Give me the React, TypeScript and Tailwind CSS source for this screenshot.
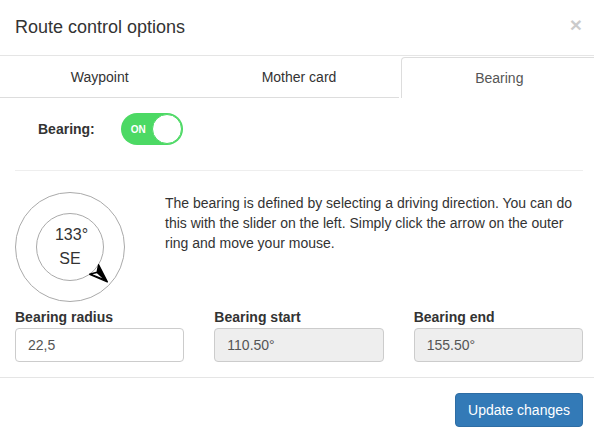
export default function App() {
  return (
    <div className="w-[594px] h-[440px] overflow-hidden bg-white">
      <div
        className="w-[598px] text-[14px] text-[#333]"
        style={{ fontFamily: '"Liberation Sans", Arial, sans-serif' }}
      >
        {/* Header */}
        <div className="h-[56px] border-b border-[#e5e5e5] px-[15px] flex items-center justify-between">
          <h4 className="text-[18px] leading-[26px] text-[#333] -mt-[2px]">Route control options</h4>
          <span className="text-[21px] font-bold leading-none text-black opacity-20 -mt-[6px] mr-[1px]">×</span>
        </div>

        {/* Tabs */}
        <div className="grid grid-cols-3 h-[42px]">
          <div className="border-b border-[#ddd] flex items-center justify-center text-[#333] pt-[2px]">Waypoint</div>
          <div className="border-b border-[#ddd] flex items-center justify-center text-[#333] pt-[2px]">Mother card</div>
          <div className="mt-[1px] ml-[2px] border-t border-l border-r border-[#ddd] rounded-t-[4px] flex items-center justify-center text-[#555] pt-[1px]">
            Bearing
          </div>
        </div>

        {/* Body */}
        <div className="px-[15px] pt-[15px] pb-[15px]">
          <div className="flex items-center h-[32px] pl-[23px] gap-[26px]">
            <label className="font-bold">Bearing:</label>
            <div className="w-[62px] h-[32px] rounded-full bg-[#4cd964] flex items-center justify-between pl-[10px] pr-[1px]">
              <span className="text-[10px] font-bold text-white">ON</span>
              <span className="w-[30px] h-[30px] rounded-full bg-white border border-[#4cd964]" />
            </div>
          </div>

          <div className="mt-[25px] border-t border-[#eee]" />

          <div className="mt-[21px] flex gap-[40px]">
            <div className="relative w-[110px] h-[110px] shrink-0 rounded-full border border-[#aaa] flex items-center justify-center">
              <div className="w-[68px] h-[68px] rounded-full border border-[#aaa] flex flex-col items-center justify-center text-[16px] leading-[24px] text-[#333]">
                <span className="ml-[3px]">133°</span>
                <span>SE</span>
              </div>
              <svg className="absolute left-[73px] top-[71px]" width="22" height="22" viewBox="-11 -11 22 22">
                <g transform="rotate(133)">
                  <path d="M0 -10 L6.5 8 L0 4 L-6.5 8 Z" fill="#000" stroke="#000" strokeWidth="1.4" strokeLinejoin="round" />
                  <path d="M0.8 -4 L4.6 6 L0.8 3.4 Z" fill="#fff" />
                </g>
              </svg>
            </div>
            <p className="leading-[20px] pt-[1px] text-[#333]">
              The bearing is defined by selecting a driving direction. You can do this with the slider on the left. Simply click the arrow on the outer ring and move your mouse.
            </p>
          </div>

          <div className="mt-[5px] grid grid-cols-3 gap-[30px]">
            <div>
              <label className="block font-bold leading-[20px] mb-[1px]">Bearing radius</label>
              <div className="h-[34px] border border-[#ccc] rounded-[4px] px-[12px] flex items-center text-[#555] bg-white">22,5</div>
            </div>
            <div>
              <label className="block font-bold leading-[20px] mb-[1px]">Bearing start</label>
              <div className="h-[34px] border border-[#ccc] rounded-[4px] px-[12px] flex items-center text-[#555] bg-[#eee]">110.50°</div>
            </div>
            <div>
              <label className="block font-bold leading-[20px] mb-[1px]">Bearing end</label>
              <div className="h-[34px] border border-[#ccc] rounded-[4px] px-[12px] flex items-center text-[#555] bg-[#eee]">155.50°</div>
            </div>
          </div>
        </div>

        {/* Footer */}
        <div className="border-t border-[#e5e5e5] px-[15px] pt-[15px] pb-[15px] flex justify-end">
          <button className="h-[34px] px-[12px] rounded-[4px] bg-[#337ab7] border border-[#2e6da4] text-white text-[14px]">
            Update changes
          </button>
        </div>
      </div>
    </div>
  );
}
